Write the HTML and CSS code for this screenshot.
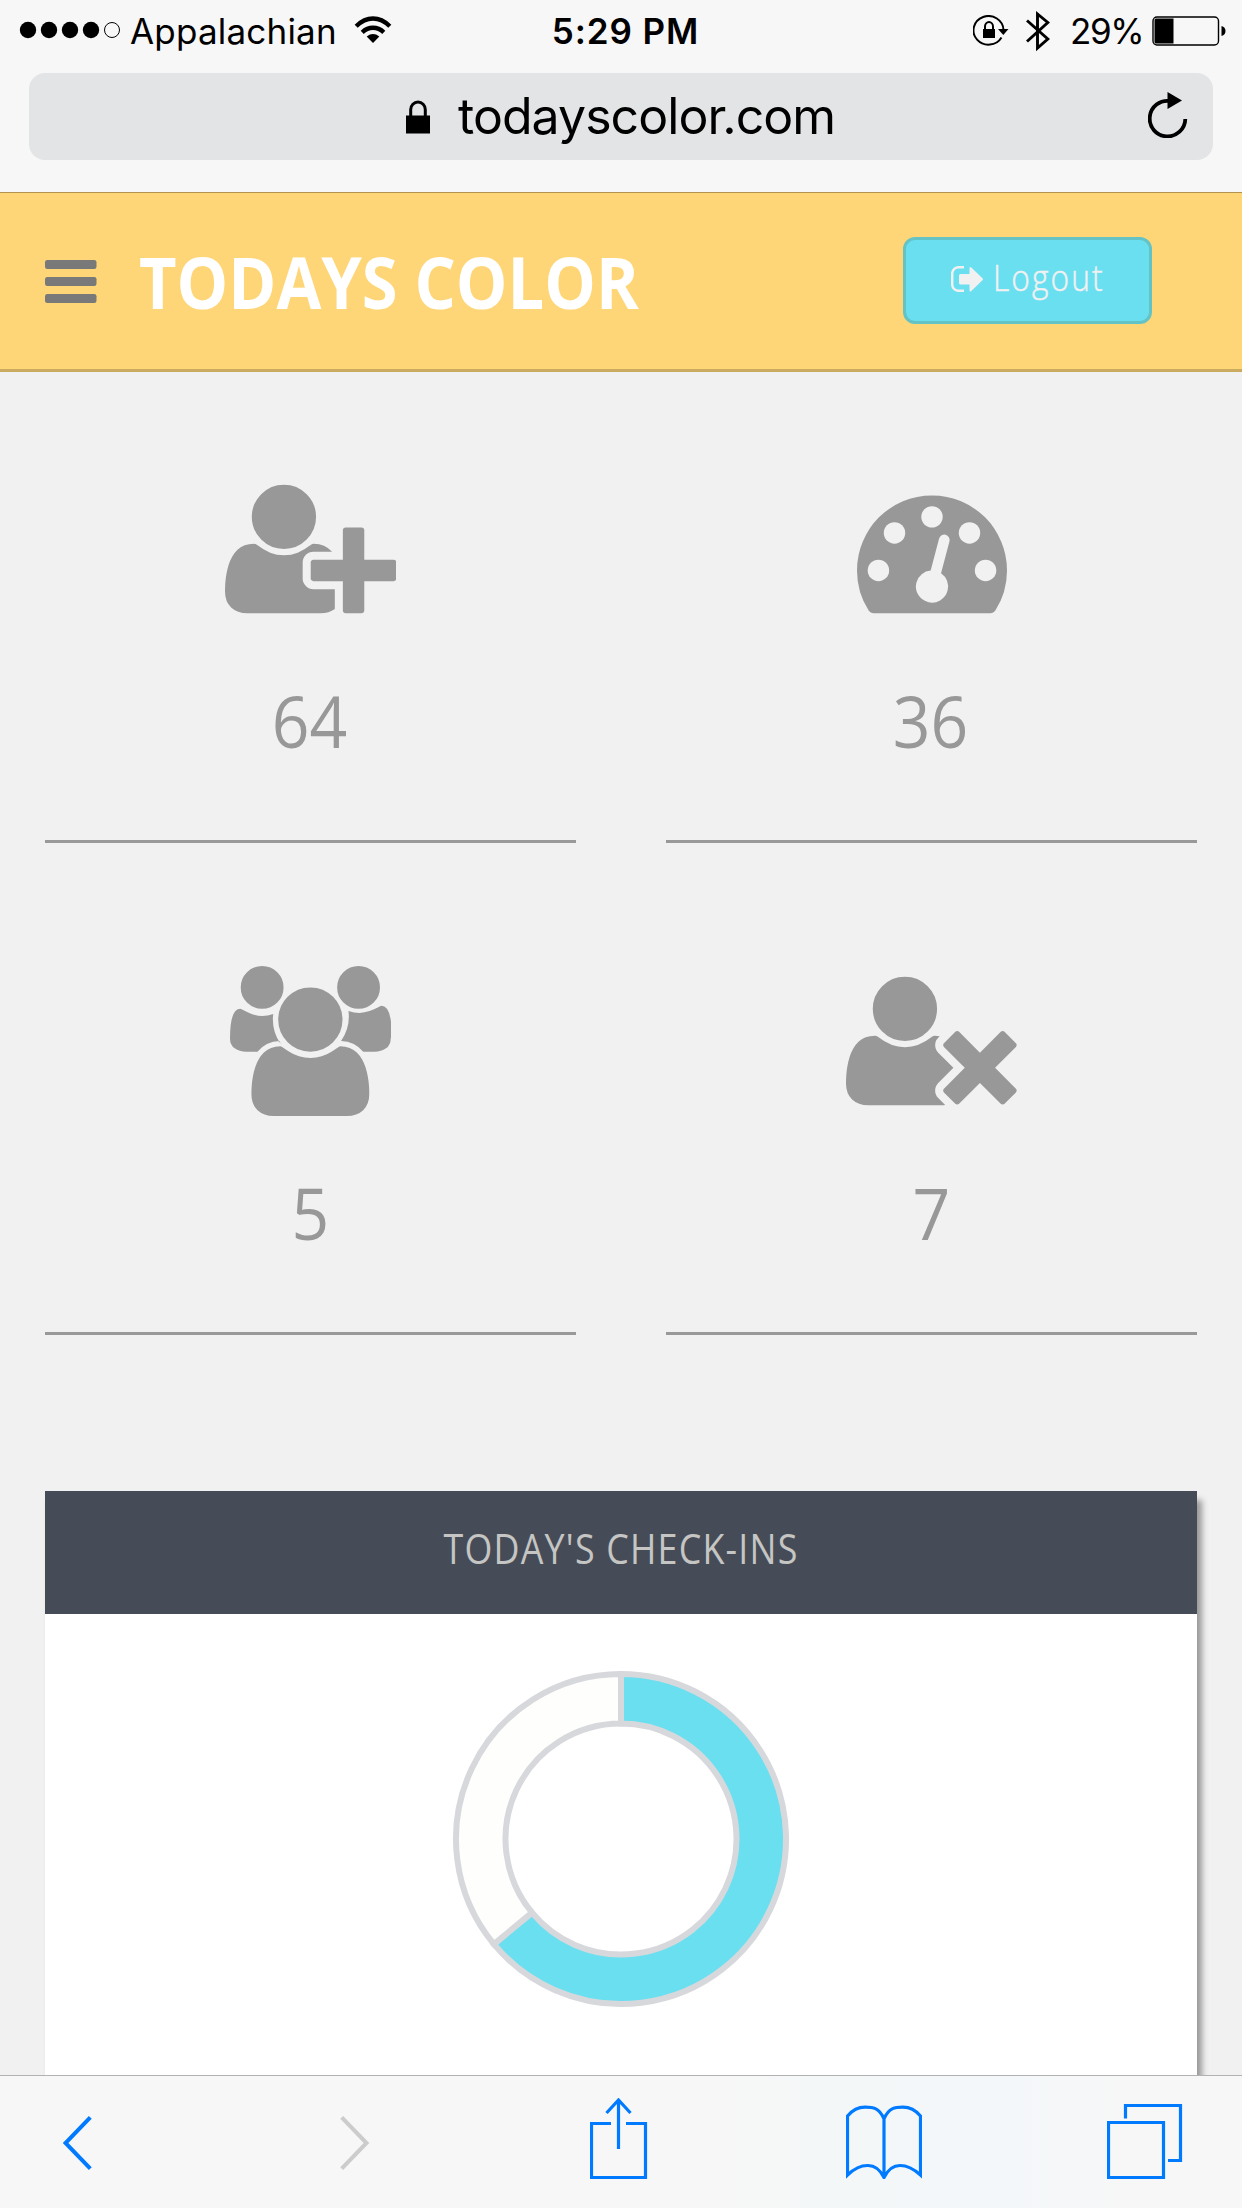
FILE: index.html
```html
<!DOCTYPE html>
<html lang="en">
<head>
<meta charset="utf-8">
<title>Todays Color</title>
<link rel="stylesheet" href="styles.css">
</head>
<body>
<div class="phone">
  <div class="browser-top">
    <div class="status">
      <div class="status-left">
        <svg class="signal" width="102" height="18" viewBox="0 0 102 18"><circle cx="9" cy="9" r="8.2"/><circle cx="30" cy="9" r="8.2"/><circle cx="51" cy="9" r="8.2"/><circle cx="72" cy="9" r="8.2"/><circle cx="93" cy="9" r="7.5" fill="none" stroke="#000"/></svg>
        <span class="carrier">Appalachian</span>
        <svg class="wifi" width="38" height="28" viewBox="0 0 38 28"><path d="M2.2 10.2Q10 2.5 19 2.5T35.8 10.2M8.2 16.3Q13 11.8 19 11.8T29.8 16.3" fill="none" stroke="#000" stroke-width="4.4"/><path d="M19 27l-6.300-6.600Q19 15.500 25.300 20.400z"/></svg>
      </div>
      <div class="clock">5:29 PM</div>
      <div class="status-right">
        <svg width="36" height="32" viewBox="0 0 36 32"><path d="M28.500 22.500A15 14.300 0 1 1 30.500 15" fill="none" stroke="#000" stroke-width="2"/><path d="M25 14h10.500l-5.200 6z"/><path d="M10 14h12v9h-12z"/><path d="M12 14.500v-3a4 4.500 0 0 1 8 0v3" fill="none" stroke="#000" stroke-width="2"/></svg>
        <svg class="bluetooth" width="24" height="42" viewBox="0 0 24 42"><path d="M1 10.500L21.800 29 11.500 38V4L21.800 12.500 1 31.500" fill="none" stroke="#000" stroke-width="2.900"/></svg>
        <span class="percent">29%</span>
        <svg width="75" height="30" viewBox="0 0 75 30"><rect x="1" y="1" width="65.500" height="28" rx="4" fill="none" stroke="#000" stroke-width="1.400"/><path d="M4 2.500h17.500v25H4q-1.500 0-1.500-1.500V4q0-1.500 1.500-1.500zM69.500 10q4 1 4 5t-4 5z"/></svg>
      </div>
    </div>
    <div class="address">
      <svg class="lock" width="24" height="34" viewBox="0 0 24 34"><path d="M0 15.500h24V33.500H0z"/><path d="M4.700 17V9.500a7.300 7.500 0 0 1 14.600 0V17" fill="none" stroke="#000" stroke-width="3"/></svg>
      <span class="domain">todayscolor.com</span>
      <svg class="reload" width="40" height="46" viewBox="0 0 40 46"><path d="M37.300 27A17.800 17.800 0 1 1 22 9" fill="none" stroke="#000" stroke-width="3.800"/><path d="M19.500 0L34 8.500 19.500 17z"/></svg>
    </div>
  </div>
  <header class="app-bar">
    <svg class="menu" width="52" height="44" viewBox="0 0 52 44"><rect width="51.500" height="9" rx="2.300"/><rect y="17" width="51.500" height="9" rx="2.300"/><rect y="34" width="51.500" height="9" rx="2.300"/></svg>
    <h1>TODAYS COLOR</h1>
    <a class="logout"><svg width="33" height="26" viewBox="0 0 33 26"><path d="M13 1.200H8A6.500 6.500 0 0 0 1.200 7.500V18.500A6.500 6.500 0 0 0 8 24.800H13" fill="none" stroke="#f1f1f1" stroke-width="2.500"/><path d="M9.500 8H18.500V2.500Q18.500 0 20.300 1.500L31.500 12.300Q32.500 13.300 31.500 14.200L20.300 25Q18.500 26.500 18.500 24V18.500H9.500Q8 18.500 8 17V9.500Q8 8 9.500 8z"/></svg><span>Logout</span></a>
  </header>
  <main>
    <section class="stats">
      <div class="stat">
        <svg width="171.430" height="150" viewBox="0 0 2048 1792"><path d="M704 896q-159 0-271.500-112.500t-112.500-271.500 112.500-271.500 271.500-112.500 271.500 112.500 112.500 271.500-112.500 271.500-271.500 112.500zm960 128h352q13 0 22.500 9.500t9.500 22.500v192q0 13-9.500 22.500t-22.500 9.500h-352v352q0 13-9.500 22.500t-22.500 9.500h-192q-13 0-22.500-9.500t-9.500-22.500v-352h-352q-13 0-22.500-9.500t-9.500-22.500v-192q0-13 9.500-22.500t22.500-9.500h352v-352q0-13 9.500-22.500t22.500-9.500h192q13 0 22.500 9.500t9.500 22.500v352zm-736 224q0 52 38 90t90 38h256v238q-68 50-171 50h-874q-121 0-194-69t-73-190q0-53 3.500-103.500t14-109 26.500-108.500 43-97.500 62-81 85.500-53.500 111.500-20q19 0 39 17 79 61 154.500 91.500t164.500 30.500 164.500-30.500 154.500-91.500q20-17 39-17 132 0 217 96h-223q-52 0-90 38t-38 90v192z"/></svg>
        <span>64</span>
      </div>
      <div class="stat">
        <svg width="150" height="150" viewBox="0 0 1792 1792"><path d="M1792 1152q0 261-141 483-19 29-54 29h-1402q-35 0-54-29-141-221-141-483 0-182 71-348t191-286 286-191 348-71 348 71 286 191 191 286 71 348z"/><g fill="#f1f1f1"><circle cx="256" cy="1152" r="128"/><circle cx="448" cy="704" r="128"/><circle cx="896" cy="512" r="128"/><circle cx="1344" cy="704" r="128"/><circle cx="1536" cy="1152" r="128"/><path d="M1004 1185l101-382q6-26-7.500-48.500t-38.500-29.500-48 6.500-30 39.500l-101 382q-60 5-107 43.500t-63 98.500q-20 77 20 146t117 89 146-20 89-117q16-60-6-117t-72-91z"/></g></svg>
        <span>36</span>
      </div>
      <div class="stat">
        <svg width="160.710" height="150" viewBox="0 0 1920 1792"><path d="M593 896q-162 5-265 128h-134q-82 0-138-40.500t-56-118.500q0-353 124-353 6 0 43.500 21t97.500 42.500 119 21.500q67 0 133-23-5 37-5 66 0 159 93 293zm1071 637q0 120-73 189.500t-194 69.500h-874q-121 0-194-69.500t-73-189.500q0-53 3.500-103.500t14-109 26.500-108.500 43-97.500 62-81 85.500-53.500 111.500-20q10 0 43 21.500t73 48 107 48 135 21.500 135-21.500 107-48 73-48 43-21.500q61 0 111.500 20t85.500 53.500 62 81 43 97.500 26.500 108.500 14 109 3.500 103.500zm-1024-1277q0 106-75 181t-181 75-181-75-75-181 75-181 181-75 181 75 75 181zm704 384q0 159-112.500 271.500t-271.500 112.500-271.500-112.500-112.500-271.500 112.500-271.500 271.500-112.500 271.500 112.500 112.500 271.500zm576 225q0 78-56 118.500t-138 40.500h-134q-103-123-265-128 93-134 93-293 0-29-5-66 66 23 133 23 59 0 119-21.500t97.500-42.500 43.500-21q124 0 124 353zm-128-609q0 106-75 181t-181 75-181-75-75-181 75-181 181-75 181 75 75 181z"/></svg>
        <span>5</span>
      </div>
      <div class="stat">
        <svg width="171.430" height="150" viewBox="0 0 2048 1792"><path d="M704 896q-159 0-271.500-112.500t-112.500-271.500 112.500-271.500 271.500-112.500 271.500 112.500 112.500 271.500-112.500 271.500-271.500 112.500zm1077 320l249 249q9 9 9 23 0 13-9 22l-136 136q-9 9-22 9-14 0-23-9l-249-249-249 249q-9 9-23 9-13 0-22-9l-136-136q-9-9-9-22 0-14 9-23l249-249-249-249q-9-9-9-23 0-13 9-22l136-136q9-9 22-9 14 0 23 9l249 249 249-249q9-9 23-9 13 0 22 9l136 136q9 9 9 22 0 14-9 23zm-498 0l-181 181q-37 37-37 91 0 53 37 90l83 83q-21 3-44 3h-874q-121 0-194-69t-73-190q0-53 3.500-103.500t14-109 26.500-108.500 43-97.500 62-81 85.500-53.500 111.500-20q19 0 39 17 154 122 319 122t319-122q20-17 39-17 28 0 57 6-28 27-41 50t-13 56q0 54 37 91z"/></svg>
        <span>7</span>
      </div>
    </section>
    <section class="card">
      <h2><span>TODAY'S CHECK-INS</span></h2>
      <div class="chart">
        <svg width="340" height="340" viewBox="-170 -170 340 340" stroke="#d7d8dc" stroke-width="6"><path fill="#69dff0" d="M0-165A165 165 0 1 1-127.130 105.170L-89 73.600A115.500 115.500 0 1 0 0-115.500z"/><path fill="#fefefc" d="M-127.130 105.170A165 165 0 0 1 0-165V-115.500A115.500 115.500 0 0 0-89 73.600z"/></svg>
      </div>
    </section>
  </main>
  <nav class="toolbar">
    <svg class="back" width="30" height="56" viewBox="0 0 30 56"><path d="M27.300 2.300L2.500 28 27.300 53.700"/></svg>
    <svg class="forward" width="30" height="56" viewBox="0 0 30 56"><path d="M1.700 2.300L26.500 28 1.700 53.700"/></svg>
    <svg class="share" width="58" height="82" viewBox="0 0 58 82"><path d="M21 25.500H1.500V79.500H55.500V25.500H36M28.500 51V3M16.500 15L28.500 2 40.500 15"/></svg>
    <svg class="book" width="76" height="74" viewBox="0 0 76 74"><path d="M38 14V71M38 14C33 2 26 2.200 19 2.200Q9 2.200 1.500 11V70C12 60 19 60.500 22 60.500Q32 60.500 38 72.500Q44 60.500 54 60.500Q64 60.500 74.500 70V11Q67 2.200 57 2.200C50 2.200 43 2 38 14z"/></svg>
    <svg class="tabs" width="76" height="76" viewBox="0 0 76 76"><path d="M1.500 18.500H56.500V73.500H1.500zM18.500 14.500V1.500H73.500V56.500H61"/></svg>
  </nav>
</div>
</body>
</html>
```
FILE: styles.css
```css
* { box-sizing: border-box; }
body { margin: 0; background: #f1f1f1; }
svg { display: block; flex: none; }
.phone {
  width: 1242px;
  height: 2208px;
  display: flex;
  flex-direction: column;
  overflow: hidden;
  font-family: "Open Sans", "Noto Sans", sans-serif;
}
.browser-top {
  flex: none;
  height: 193px;
  background: #f7f7f7;
  border-bottom: 1px solid #b1934f;
  font-family: Inter, "Liberation Sans", sans-serif;
  color: #000;
}
.status {
  height: 73px;
  padding: 0 15px 11px 19px;
  display: grid;
  grid-template-columns: 1fr auto 1fr;
  align-items: center;
  font-size: 35px;
  line-height: 62px;
  white-space: nowrap;
}
.status-left, .status-right { display: flex; align-items: center; }
.status-right { justify-content: flex-end; }
.signal { margin-top: -2px; }
.carrier { width: 208px; margin-left: 9px; letter-spacing: 0.2px; }
.wifi { margin: -2px 0 0 16px; }
.clock { padding-left: 5px; font-weight: 600; letter-spacing: 0.9px; }
.bluetooth { margin-left: 17px; }
.percent { width: 70px; margin: 0 12px 0 20px; letter-spacing: -1.4px; }
.address {
  height: 87px;
  margin: 0 29px;
  padding: 0 25px 0 377px;
  border-radius: 16px;
  background: #e2e4e6;
  display: flex;
  align-items: center;
}
.domain { margin-left: 28px; font-size: 50px; line-height: 87px; letter-spacing: -0.95px; }
.reload { margin: -3px 0 0 auto; }
.app-bar {
  flex: none;
  height: 179px;
  padding: 0 90px 0 45px;
  background: #fed678;
  border-bottom: 3px solid #caab5f;
  display: flex;
  align-items: center;
}
.menu { margin-top: 2px; fill: #797979; }
h1, h2 { margin: 0; white-space: nowrap; }
h1 {
  margin: 2px 0 0 42px;
  color: #fff;
  font-size: 71px;
  line-height: 96px;
  font-weight: 700;
  transform: scaleX(0.915);
  transform-origin: left;
}
.logout {
  width: 249px;
  height: 87px;
  margin: -1px 0 0 auto;
  border: 3px solid #66c3c5;
  border-radius: 12px;
  background: #69dff0;
  color: #f1f1f1;
  display: flex;
  align-items: center;
  padding: 0 0 4px 45px;
  gap: 9px;
  font-size: 36px;
  font-weight: 300;
  letter-spacing: 2.4px;
  -webkit-text-stroke: 0.5px #f1f1f1;
}
.logout svg { fill: #f1f1f1; }
.logout span { margin-top: -2px; transform: scaleX(0.88); transform-origin: left; }
main { flex: 1; min-height: 0; padding: 0 45px; }
.stats {
  display: grid;
  grid-template-columns: 531px 531px;
  grid-auto-rows: 471px;
  row-gap: 21px;
  column-gap: 90px;
}
.stat {
  padding-top: 102px;
  border-bottom: 3px solid #999;
  display: flex;
  flex-direction: column;
  align-items: center;
  color: #989898;
  fill: #989898;
  font-size: 71px;
  line-height: 96px;
}
.stat span { margin: 49px 1px 0 0; transform: scaleX(0.93); }
.card { margin-top: 156px; height: 900px; background: #fff; box-shadow: 5px 9px 6px #999; }
h2 {
  height: 123px;
  background: #464c57;
  color: #c5c5c3;
  text-align: center;
  font-size: 42px;
  line-height: 114px;
  font-weight: 400;
  letter-spacing: 1.4px;
}
h2 span { display: inline-block; transform: scaleX(0.853); }
.chart { padding-top: 55px; display: flex; justify-content: center; }
.toolbar {
  flex: none;
  height: 133px;
  position: relative;
  padding: 0 0 0 63px;
  border-top: 1px solid #b2b2b2;
  background: linear-gradient(90deg, #f7f7f7 58%, #f3f7f8 68%, #f4f7f9 82%, #f7f7f7 92%);
  display: flex;
  align-items: center;
}
.toolbar svg { fill: none; stroke: #007aff; stroke-width: 3.2; }
.toolbar .back, .toolbar .forward { margin-top: 2px; stroke-width: 4; }
.toolbar .forward { margin-left: 247px; stroke: #ccc; }
.share { margin: -6px 0 0 220px; }
.book { margin-left: 198px; }
.tabs { margin-left: 185px; }
```
